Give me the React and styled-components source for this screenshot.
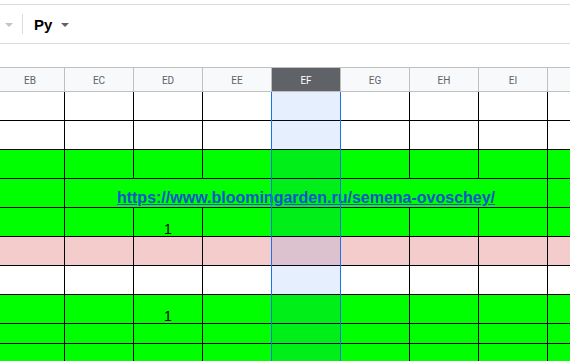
import styled, { createGlobalStyle } from "styled-components";

const GlobalStyle = createGlobalStyle`
  html, body {
    margin: 0;
    padding: 0;
    background: #fff;
    overflow: hidden;
  }
  body {
    font-family: "Liberation Sans", Arial, sans-serif;
  }
`;

const GREEN = "#00ff00";
const WHITE = "#ffffff";
const PINK = "#f4cccc";

const COLUMNS = ["EB", "EC", "ED", "EE", "EF", "EG", "EH", "EI", ""];
const SELECTED = 4;

const ROWS = [
  { fill: WHITE, height: 29 },
  { fill: WHITE, height: 29 },
  { fill: GREEN, height: 29 },
  { fill: GREEN, height: 29, link: "https://www.bloomingarden.ru/semena-ovoschey/" },
  { fill: GREEN, height: 29, values: { 2: "1" } },
  { fill: PINK, height: 29 },
  { fill: WHITE, height: 29 },
  { fill: GREEN, height: 29, values: { 2: "1" } },
  { fill: GREEN, height: 20 },
  { fill: GREEN, height: 29 },
];

const Page = styled.div`
  width: 570px;
  height: 361px;
  padding-top: 4px;
  box-sizing: border-box;
  overflow: hidden;
`;

const Toolbar = styled.div`
  height: 40px;
  box-sizing: border-box;
  border-top: 1px solid #dadce0;
  border-bottom: 1px solid #dadce0;
  display: flex;
  align-items: center;
  padding-left: 5px;
`;

const Caret = styled.span`
  width: 0;
  height: 0;
  border-left: 4px solid transparent;
  border-right: 4px solid transparent;
  border-top: 4px solid ${(p) => p.$tone};
  margin-top: 1px;
`;

const Divider = styled.span`
  width: 1px;
  height: 20px;
  background: #dadce0;
  margin: 0 11px 0 9px;
`;

const FontLabel = styled.span`
  font-family: "Liberation Sans", Arial, sans-serif;
  font-size: 15px;
  font-weight: 700;
  color: #000;
  margin-right: 9px;
  margin-top: 1px;
`;

const FormulaGap = styled.div`
  height: 23px;
`;

const Viewport = styled.div`
  overflow: hidden;
  width: 570px;
`;

const Sheet = styled.div`
  display: grid;
  grid-template-columns: repeat(9, 69px);
  grid-template-rows: 24px ${(p) => p.$rows};
  margin-left: -4px;
  border-top: 1px solid #c0c0c0;
  width: max-content;
`;

const HeaderCell = styled.div`
  grid-row: 1;
  grid-column: ${(p) => p.$col + 1};
  box-sizing: border-box;
  border-right: 1px solid #c0c0c0;
  border-bottom: 1px solid #c0c0c0;
  background: ${(p) => (p.$active ? "#5f6368" : "#f8f9fa")};
  color: ${(p) => (p.$active ? "#ffffff" : "#5f6368")};
  font-family: Roboto, "Liberation Sans", sans-serif;
  font-size: 10px;
  display: flex;
  align-items: center;
  justify-content: center;
  padding-top: 1px;
`;

const Cell = styled.div`
  grid-row: ${(p) => p.$row + 2};
  grid-column: ${(p) => `${p.$col + 1} / span ${p.$span || 1}`};
  box-sizing: border-box;
  border-right: 1px solid #000;
  border-bottom: 1px solid #000;
  background: ${(p) => p.$fill};
  display: flex;
  align-items: flex-end;
  justify-content: center;
  font-family: "Liberation Sans", Arial, sans-serif;
  font-size: 14px;
  color: #000;
  line-height: 14px;
  overflow: hidden;
  white-space: nowrap;
`;

const Link = styled.a`
  color: #1155cc;
  font-weight: 700;
  font-size: 16px;
  line-height: 18px;
  text-decoration: underline;
`;

const Selection = styled.div`
  grid-column: ${SELECTED + 1};
  grid-row: 2 / -1;
  margin-left: -1px;
  box-sizing: border-box;
  border-left: 1px solid #1a73e8;
  border-right: 1px solid #1a73e8;
  background: rgba(14, 101, 235, 0.1);
  pointer-events: none;
  z-index: 1;
`;

function Row({ row, index }) {
  if (row.link) {
    return (
      <>
        <Cell $row={index} $col={0} $fill={row.fill} />
        <Cell $row={index} $col={1} $span={7} $fill={row.fill}>
          <Link href={row.link}>{row.link}</Link>
        </Cell>
        <Cell $row={index} $col={8} $fill={row.fill} />
      </>
    );
  }
  return COLUMNS.map((c, i) => (
    <Cell key={i} $row={index} $col={i} $fill={row.fill}>
      {row.values && row.values[i]}
    </Cell>
  ));
}

export default function App() {
  const rowTemplate = ROWS.map((r) => `${r.height}px`).join(" ");
  return (
    <Page>
      <GlobalStyle />
      <Toolbar>
        <Caret $tone="#c4c4c4" />
        <Divider />
        <FontLabel>Ру</FontLabel>
        <Caret $tone="#5f6368" />
      </Toolbar>
      <FormulaGap />
      <Viewport>
        <Sheet $rows={rowTemplate}>
          {COLUMNS.map((c, i) => (
            <HeaderCell key={i} $col={i} $active={i === SELECTED}>
              {c}
            </HeaderCell>
          ))}
          {ROWS.map((r, i) => (
            <Row key={i} index={i} row={r} />
          ))}
          <Selection />
        </Sheet>
      </Viewport>
    </Page>
  );
}
